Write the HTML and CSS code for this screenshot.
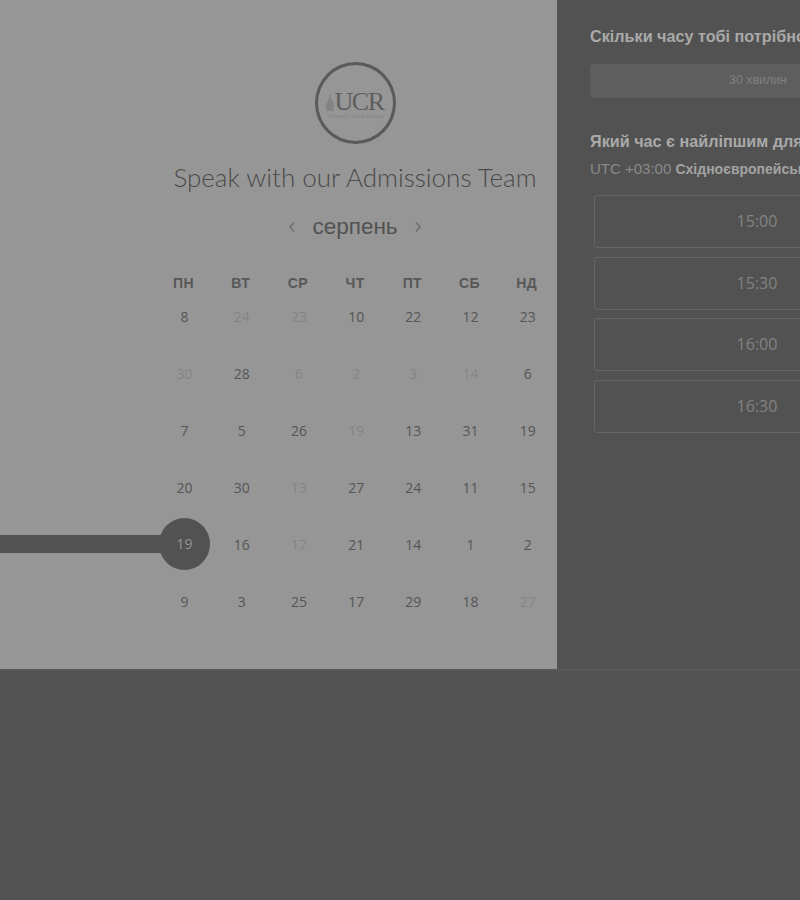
FILE: index.html
```html
<!DOCTYPE html>
<html lang="uk">
<head>
    <meta charset="UTF-8">
    <meta name="viewport" content="width=device-width, initial-scale=1.0">
    <title>Speak with our Admissions Team</title>
    <link rel="stylesheet" href="styles.css">
</head>
<body>
    <main class="booking">
        <section class="calendar-panel">
            <div class="logo">
                <div class="logo-mark">
                    <svg class="logo-tower" viewBox="0 0 10 24" aria-hidden="true">
                        <path d="M0 24V12h2V8h2V1h2v7h2v4h2v12z" fill="#838383"/>
                    </svg>
                    <span class="logo-name">UCR</span>
                </div>
                <span class="logo-sub">University Group Rectors</span>
            </div>
            <h1 class="title">Speak with our Admissions Team</h1>
            <div class="month-nav">
                <svg class="chevron" viewBox="0 0 8 12" aria-hidden="true"><path d="M6 1.5 2 6l4 4.5"/></svg>
                <span class="month">серпень</span>
                <svg class="chevron" viewBox="0 0 8 12" aria-hidden="true"><path d="M2 1.5 6 6l-4 4.5"/></svg>
            </div>
            <div class="weekdays">
                <span>ПН</span><span>ВТ</span><span>СР</span><span>ЧТ</span><span>ПТ</span><span>СБ</span><span>НД</span>
            </div>
            <div class="days">
                <span>8</span><span class="off">24</span><span class="off">23</span><span>10</span><span>22</span><span>12</span><span>23</span>
                <span class="off">30</span><span>28</span><span class="off">6</span><span class="off">2</span><span class="off">3</span><span class="off">14</span><span>6</span>
                <span>7</span><span>5</span><span>26</span><span class="off">19</span><span>13</span><span>31</span><span>19</span>
                <span>20</span><span>30</span><span class="off">13</span><span>27</span><span>24</span><span>11</span><span>15</span>
                <span class="selected"><b class="selected-dot">19</b></span><span>16</span><span class="off">17</span><span>21</span><span>14</span><span>1</span><span>2</span>
                <span>9</span><span>3</span><span>25</span><span>17</span><span>29</span><span>18</span><span class="off">27</span>
            </div>
        </section>
        <section class="time-panel">
            <h2 class="question">Скільки часу тобі потрібно?</h2>
            <div class="duration">30 хвилин</div>
            <h2 class="question question-time">Який час є найліпшим для тебе?</h2>
            <p class="timezone">UTC +03:00 <strong>Східноєвропейський час</strong></p>
            <div class="slots">
                <div class="slot">15:00</div>
                <div class="slot">15:30</div>
                <div class="slot">16:00</div>
                <div class="slot">16:30</div>
            </div>
        </section>
    </main>
</body>
</html>
```

FILE: styles.css
```css
html, body {
    height: 100%;
}

body {
    margin: 0;
    background-color: #525252;
    font-family: "Liberation Sans", Arial, sans-serif;
    overflow: hidden;
}

.booking {
    display: flex;
    width: 926px;
    height: 669px;
    box-shadow: 0 1px 2px rgba(120, 120, 120, 0.4);
    filter: blur(0.5px);
}

.calendar-panel {
    flex: 0 0 557px;
    box-sizing: border-box;
    padding: 62px 0 0 155px;
    background-color: #969696;
    color: #4f4f4f;
}

.logo {
    box-sizing: border-box;
    display: flex;
    flex-direction: column;
    align-items: center;
    justify-content: flex-start;
    width: 81px;
    height: 82px;
    margin-left: 160px;
    padding-top: 24px;
    border: 3px solid #5a5a5a;
    border-radius: 50%;
}

.logo-mark {
    display: flex;
    align-items: flex-end;
    gap: 1px;
    margin-left: -2px;
}

.logo-tower {
    width: 8px;
    height: 18px;
    margin-bottom: 3px;
}

.logo-name {
    font-family: "Liberation Serif", serif;
    font-size: 26px;
    line-height: 25px;
    letter-spacing: -1.5px;
    color: #5e5e5e;
}

.logo-sub {
    font-size: 5px;
    line-height: 5px;
    white-space: nowrap;
    color: #848484;
}

.title {
    width: 400px;
    margin: 15px 0 0;
    font-family: Lato, sans-serif;
    font-size: 26px;
    font-weight: 300;
    line-height: 36px;
    text-align: center;
    white-space: nowrap;
    color: #4a4a4a;
}

.month-nav {
    display: flex;
    align-items: center;
    justify-content: center;
    gap: 16px;
    width: 400px;
    height: 30px;
    margin-top: 17px;
}

.month {
    font-size: 22.5px;
    color: #525252;
}

.chevron {
    width: 8px;
    height: 12px;
    fill: none;
    stroke: #707070;
    stroke-width: 1.5;
}

.weekdays,
.days {
    display: grid;
    grid-template-columns: repeat(7, 57.2px);
}

.weekdays {
    height: 20px;
    margin-top: 31px;
    font-size: 14px;
    font-weight: 700;
    letter-spacing: 0.4px;
    line-height: 20px;
    text-align: center;
    color: #585858;
}

.days {
    grid-auto-rows: 57.2px;
    margin: 9px 0 0 1px;
    font-family: "Open Sans", sans-serif;
    font-size: 14px;
    color: #555;
}

.days span {
    display: flex;
    align-items: center;
    justify-content: center;
    height: 28px;
}

.days .off {
    color: #858585;
}

.selected {
    position: relative;
}

/* the thick bar runs in from the left edge, under the day dot */
.selected::before {
    content: "";
    position: absolute;
    top: 4px;
    right: 30px;
    width: 200px;
    height: 18px;
    background-color: #525252;
}

.selected-dot {
    position: absolute;
    top: -13px;
    left: 3px;
    display: flex;
    align-items: center;
    justify-content: center;
    width: 51px;
    height: 52px;
    border-radius: 50%;
    background-color: #525252;
    font-weight: 400;
    color: #979797;
}

.time-panel {
    flex: 1;
    box-sizing: border-box;
    padding: 26px 0 0 33px;
    background-color: #525252;
    color: #a9a9a9;
}

.question {
    margin: 0;
    font-size: 16.2px;
    font-weight: 700;
    line-height: 20px;
    white-space: nowrap;
}

.duration {
    box-sizing: border-box;
    height: 34px;
    margin-top: 18px;
    border: 1px solid #5e5e5e;
    border-radius: 3px;
    background-color: #5e5e5e;
    font-size: 12.4px;
    line-height: 31px;
    text-align: center;
    color: #808080;
}

.question-time {
    margin-top: 33px;
}

.timezone {
    margin: 8px 0 0;
    font-size: 15px;
    line-height: 20px;
    white-space: nowrap;
    color: #8a8a8a;
}

.timezone strong {
    font-size: 14px;
    color: #a3a3a3;
}

.slots {
    display: flex;
    flex-direction: column;
    gap: 8.5px;
    margin: 16px 6px 0 4px;
}

.slot {
    box-sizing: border-box;
    height: 53px;
    border: 1px solid #666;
    border-radius: 3px;
    font-family: "Open Sans", sans-serif;
    font-size: 16px;
    line-height: 51px;
    text-align: center;
    color: #828282;
}
```
